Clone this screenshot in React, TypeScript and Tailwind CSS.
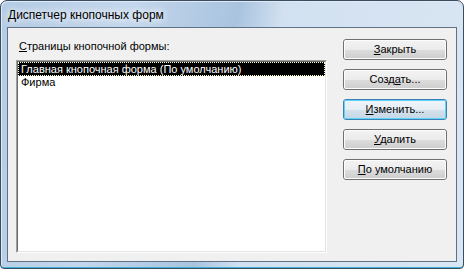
export default function App() {
  const btn =
    "h-[21px] w-[104px] rounded-[3px] border border-[#707070] p-0 flex";
  const inner =
    "flex-1 rounded-[2px] border border-[#fcfcfc] bg-[linear-gradient(#f2f2f2_0%,#ebebeb_50%,#dddddd_51%,#cfcfcf_100%)] flex items-center justify-center text-[11px] leading-none text-black";
  return (
    <div className="w-[464px] h-[269px] bg-white font-['Liberation_Sans',Arial,sans-serif]">
      <div className="w-[464px] h-[269px] rounded-t-[7px] rounded-b-[4px] border border-[#3b4d61] shadow-[inset_0_-1px_0_#3fb0d8,inset_1px_1px_0_#dfeaf5] bg-[linear-gradient(100deg,#b3cbe4_0%,#c4d7ec_25%,#a9c3df_47%,#d2e1f1_56%,#d9e6f3_100%)] flex flex-col">
        <div className="h-[26px] pl-[7px] pt-[1px] flex items-center text-[12px] text-black [text-shadow:0_0_6px_#ffffff,0_0_10px_#ffffff]">
          Диспетчер кнопочных форм
        </div>
        <div className="mx-[6px] mb-[6px] flex-1 border border-[#5f7184] bg-[#f0f0f0] flex">
          <div className="pl-[8px] pt-[12px] pb-[8px] flex flex-col">
            <div className="h-[13px] pl-[3px] text-[11px] leading-[13px] text-black">
              <span className="underline">С</span>траницы кнопочной формы:
            </div>
            <div className="mt-[7px] w-[311px] flex-1 border-l border-t border-[#a0a0a0] border-r-white border-b-white border-r border-b flex">
              <div className="flex-1 border-l border-t border-[#696969] border-r border-b border-r-[#e3e3e3] border-b-[#e3e3e3] bg-white flex flex-col">
                <div className="h-[14px] bg-black border border-dotted border-[#ffffcc] pl-[2px] text-[11px] leading-[12px] text-white">
                  Главная кнопочная форма (По умолчанию)
                </div>
                <div className="h-[13px] pl-[3px] text-[11px] leading-[13px] text-black">
                  Фирма
                </div>
              </div>
            </div>
          </div>
          <div className="ml-[16px] pt-[11px] flex flex-col gap-[9px]">
            <div className={btn}>
              <div className={inner}>
                <span><span className="underline">З</span>акрыть</span>
              </div>
            </div>
            <div className={btn}>
              <div className={inner}>
                <span>Созд<span className="underline">а</span>ть...</span>
              </div>
            </div>
            <div className="h-[21px] w-[104px] rounded-[3px] border border-[#3c7fb1] flex">
              <div className="flex-1 rounded-[2px] border border-[#5fd3fb] bg-[linear-gradient(#eef4f8_0%,#e6eef4_50%,#d4e2ec_51%,#c6d8e6_100%)] flex items-center justify-center text-[11px] leading-none text-black">
                <span><span className="underline">И</span>зменить...</span>
              </div>
            </div>
            <div className={btn}>
              <div className={inner}>
                <span><span className="underline">У</span>далить</span>
              </div>
            </div>
            <div className={btn}>
              <div className={inner}>
                <span><span className="underline">П</span>о умолчанию</span>
              </div>
            </div>
          </div>
        </div>
      </div>
    </div>
  );
}
